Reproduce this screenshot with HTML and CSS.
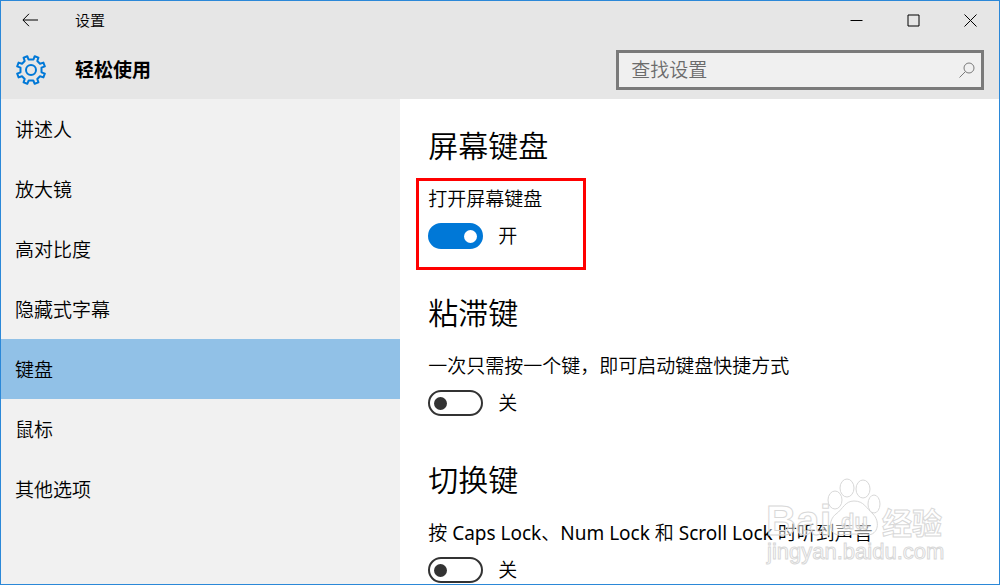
FILE: index.html
```html
<!DOCTYPE html>
<html lang="zh-CN">
<head>
    <meta charset="UTF-8">
    <meta name="viewport" content="width=device-width, initial-scale=1.0">
    <title>设置</title>
    <link rel="stylesheet" href="styles.css">
</head>
<body>

    <div class="window">
        <header class="header">
            <div class="titlebar">
                <button class="back" type="button" aria-label="返回">
                    <svg width="16" height="14" viewBox="0 0 16 14"><path d="M7 .8L.9 7 7 13.2M1 7h15"/></svg>
                </button>
                <span class="app-name">设置</span>
                <div class="window-buttons">
                    <button type="button" aria-label="最小化">
                        <svg width="13" height="13" viewBox="0 0 13 13"><path d="M.5 6.5h12"/></svg>
                    </button>
                    <button type="button" aria-label="最大化">
                        <svg width="13" height="13" viewBox="0 0 13 13"><path d="M1 1h11v11H1z"/></svg>
                    </button>
                    <button type="button" aria-label="关闭">
                        <svg width="13" height="13" viewBox="0 0 13 13"><path d="M.5.5l12 12M12.5.5l-12 12"/></svg>
                    </button>
                </div>
            </div>
            <div class="toolbar">
                <svg class="gear" width="30" height="30" viewBox="0 0 30 30">
                    <path d="M12.5 4.500L11.300 1.200 7.600 2.600 8.700 6 6 8.700 2.600 7.600 1.200 11.300 4.500 12.700V17.300L1.200 18.700 2.600 22.400 6 21.300 8.700 24 7.600 27.400 11.300 28.800 12.700 25.500H17.300L18.700 28.800 22.400 27.400 21.300 24 24 21.300 27.400 22.400 28.800 18.700 25.500 17.300V12.700L28.800 11.300 27.400 7.600 24 8.700 21.300 6 22.400 2.600 18.700 1.200 17.500 4.500z"/>
                    <circle cx="15" cy="15" r="5"/>
                </svg>
                <h1>轻松使用</h1>
                <div class="search">
                    <input type="search" placeholder="查找设置" aria-label="查找设置">
                    <svg width="16" height="16" viewBox="0 0 16 16"><circle cx="10" cy="6" r="5"/><path d="M6.300 9.700L.5 15.500"/></svg>
                </div>
            </div>
        </header>

        <div class="main">
            <nav class="sidebar">
                <a href="#">讲述人</a>
                <a href="#">放大镜</a>
                <a href="#">高对比度</a>
                <a href="#">隐藏式字幕</a>
                <a href="#" class="active">键盘</a>
                <a href="#">鼠标</a>
                <a href="#">其他选项</a>
            </nav>

            <main class="content">
                <section>
                    <h2>屏幕键盘</h2>
                    <div class="setting marked">
                        <p id="osk">打开屏幕键盘</p>
                        <label class="toggle"><input type="checkbox" aria-describedby="osk" checked>开</label>
                    </div>
                </section>
                <section>
                    <h2>粘滞键</h2>
                    <div class="setting">
                        <p id="sticky">一次只需按一个键，即可启动键盘快捷方式</p>
                        <label class="toggle"><input type="checkbox" aria-describedby="sticky">关</label>
                    </div>
                </section>
                <section>
                    <h2>切换键</h2>
                    <div class="setting">
                        <p id="togglekeys">按 <span class="keys">Caps Lock</span>、<span class="keys">Num Lock</span> 和 <span class="keys">Scroll Lock</span> 时听到声音</p>
                        <label class="toggle"><input type="checkbox" aria-describedby="togglekeys">关</label>
                    </div>
                </section>
            </main>
        </div>

        <svg class="watermark" width="182" height="90" viewBox="0 0 182 90">
            <text class="brand" x="1" y="58">Bai</text>
            <ellipse cx="70" cy="23" rx="7" ry="9"/>
            <ellipse cx="82" cy="11" rx="7" ry="9"/>
            <ellipse cx="98" cy="12" rx="7" ry="9"/>
            <ellipse cx="109" cy="27" rx="6" ry="9"/>
            <path d="M89 24c-9 0-11 8-18 13-8 6-8 21 4 21 5 0 9-1 14-1s8 1 13 1c12 0 13-14 6-21-7-6-9-13-19-13z"/>
            <text class="du" x="76" y="52">du</text>
            <text class="cn" x="117" y="57">经验</text>
            <text class="site" x="2" y="82">jingyan.baidu.com</text>
        </svg>
    </div>

</body>
</html>
```

FILE: styles.css
```css
*, *::before, *::after {
    box-sizing: border-box;
}
body {
    margin: 0;
    font-family: "Noto Sans", "Noto Sans CJK SC", sans-serif;
    font-size: 19px;
    line-height: 28px;
    font-weight: 350;
    color: #000;
}
h1, h2, p {
    margin: 0;
}
svg {
    display: block;
    fill: none;
    stroke: #000;
}
button {
    display: flex;
    align-items: center;
    justify-content: center;
    padding: 0;
    border: none;
    background: none;
}
.window {
    position: relative;
    display: flex;
    flex-direction: column;
    height: 100vh;
    border: 1px solid #2b88d8;
    background-color: #fff;
    overflow: hidden;
}

/* header */
.header {
    background-color: #e6e6e6;
    padding-bottom: 9px;
}
.titlebar {
    display: flex;
    align-items: center;
    height: 38px;
    font-size: 15px;
}
.back {
    width: 58px;
    height: 38px;
}
.app-name {
    margin-left: 16px;
}
.window-buttons {
    display: flex;
    margin-left: auto;
}
.window-buttons button {
    width: 57px;
    height: 38px;
}
.toolbar {
    display: flex;
    align-items: center;
    padding: 11px 15px 0;
    height: 51px;
}
.gear {
    stroke: #0078d7;
    stroke-width: 2;
    stroke-linejoin: round;
}
h1 {
    margin-left: 29px;
    font-size: 19px;
    line-height: 28px;
    font-weight: 700;
}
.search {
    display: flex;
    align-items: center;
    width: 38%;
    height: 40px;
    margin-left: auto;
    padding: 0 6px 0 12px;
    border: 3px solid #7a7a7a;
    background-color: #f0f0f0;
}
.search input {
    flex: 1;
    min-width: 0;
    padding: 0;
    border: none;
    outline: none;
    background: none;
    font: inherit;
}
.search input::placeholder {
    color: #6b6b6b;
}
.search svg {
    stroke: #7a7a7a;
}

/* body */
.main {
    display: flex;
    flex: 1;
    min-height: 0;
}
.sidebar {
    width: 40%;
    background-color: #f1f1f1;
}
.sidebar a {
    display: flex;
    align-items: center;
    height: 60px;
    padding: 2px 14px 0;
    color: #000;
    text-decoration: none;
}
.sidebar a.active {
    background-color: #91c1e7;
}
.content {
    flex: 1;
    padding: 26px 28px 0;
    overflow: hidden;
}
section {
    margin-bottom: 43px;
}
h2 {
    margin-bottom: 18px;
    font-size: 30px;
    line-height: 42px;
    font-weight: 350;
}
.setting {
    position: relative;
}
.keys {
    font-weight: 400;
}
.marked::after {
    content: "";
    position: absolute;
    top: -7px;
    left: -12px;
    width: 170px;
    height: 92px;
    border: 3px solid #f00;
    pointer-events: none;
}
.toggle {
    display: flex;
    align-items: center;
    gap: 15px;
    height: 26px;
    margin-top: 10px;
}
.toggle input {
    appearance: none;
    display: flex;
    align-items: center;
    width: 55px;
    height: 26px;
    margin: 0;
    padding: 0 4px;
    border: 2px solid #333;
    border-radius: 13px;
}
.toggle input::before {
    content: "";
    width: 13px;
    height: 13px;
    border-radius: 50%;
    background-color: #333;
}
.toggle input:checked {
    justify-content: flex-end;
    border-color: #0078d7;
    background-color: #0078d7;
}
.toggle input:checked::before {
    background-color: #fff;
}

/* watermark */
.watermark {
    position: absolute;
    right: 52px;
    bottom: 17px;
    fill: rgba(255, 255, 255, 0.5);
    stroke: #d8d8d8;
    font-family: "Liberation Sans", "Noto Sans CJK SC", sans-serif;
    font-weight: 700;
    pointer-events: none;
}
.brand {
    font-size: 42px;
}
.du {
    font-size: 22px;
}
.cn {
    font-size: 30px;
}
.site {
    font-size: 22px;
    font-weight: 400;
}
```
